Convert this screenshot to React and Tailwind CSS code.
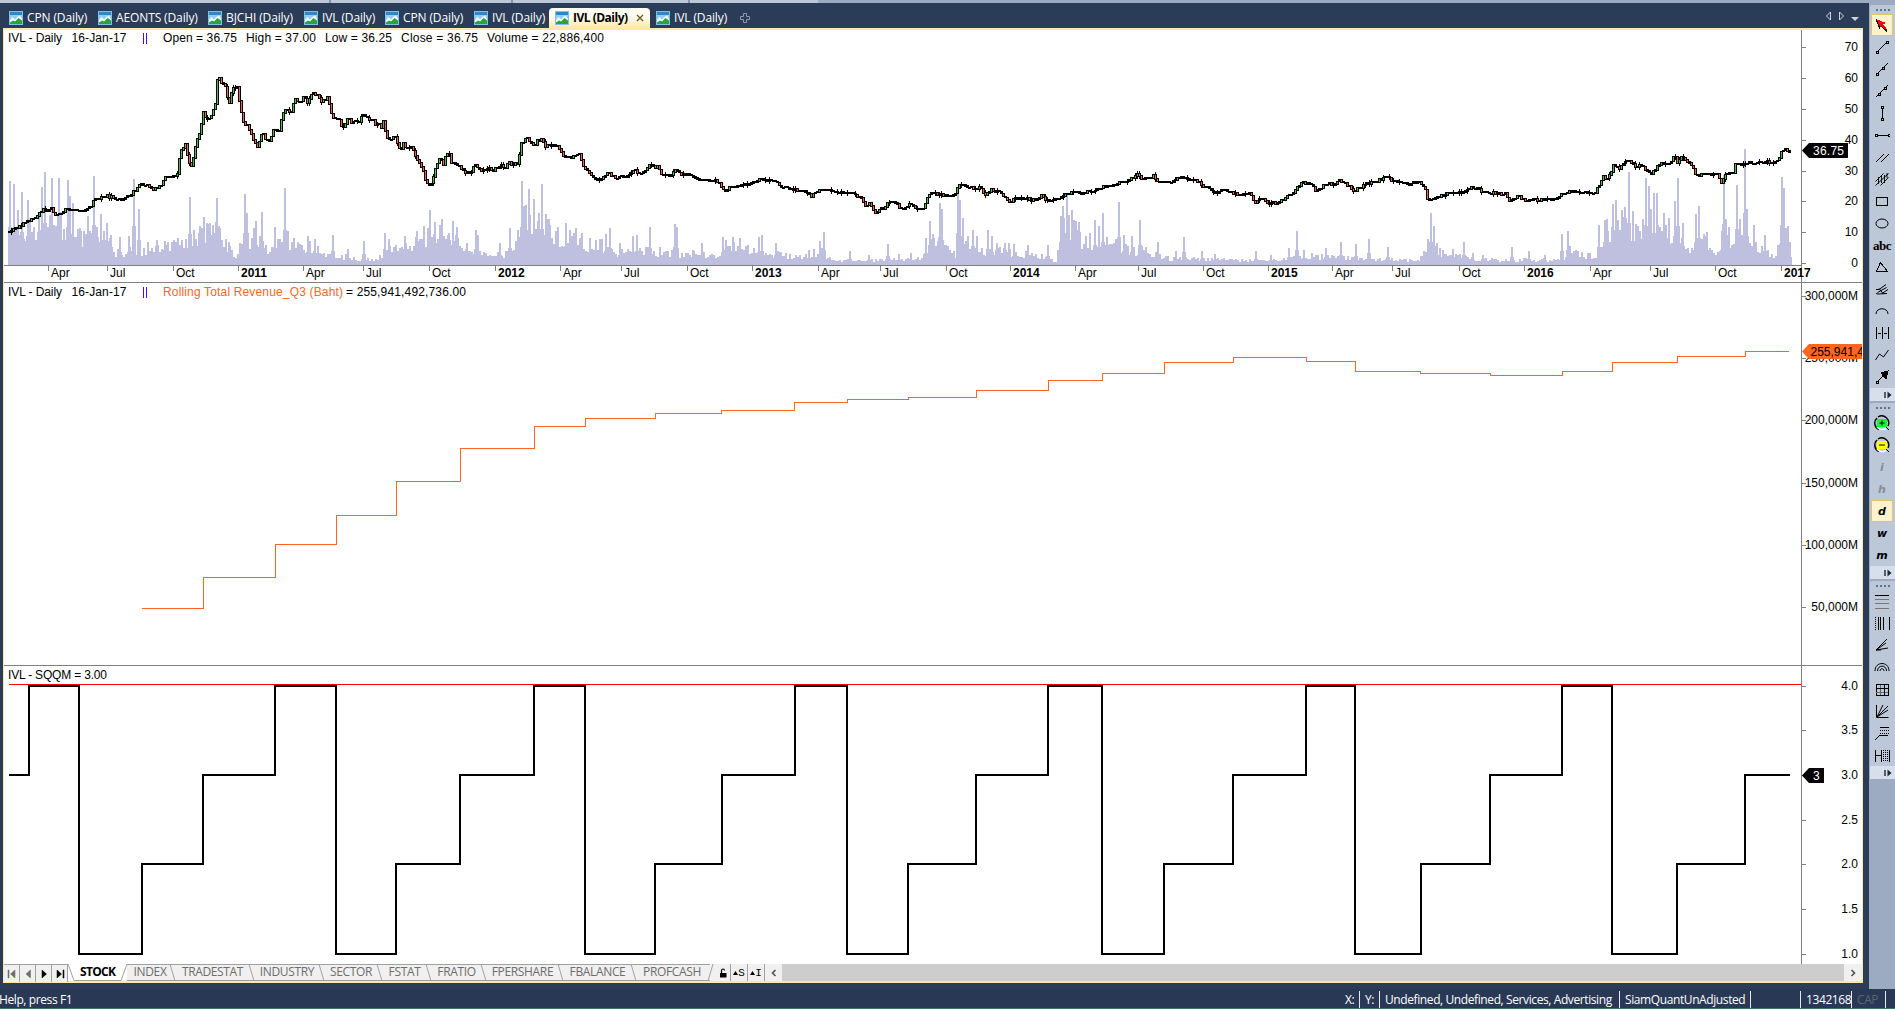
import clsx from 'clsx';

const DOC_TABS = [
  { label: 'CPN (Daily)', width: 'w-[89px]' },
  { label: 'AEONTS (Daily)', width: 'w-[110px]' },
  { label: 'BJCHI (Daily)', width: 'w-[96px]' },
  { label: 'IVL (Daily)', width: 'w-[81px]' },
  { label: 'CPN (Daily)', width: 'w-[89px]' },
  { label: 'IVL (Daily)', width: 'w-[81px]' },
  { label: 'IVL (Daily)', width: 'w-[101px]', active: true },
  { label: 'IVL (Daily)', width: 'w-[89px]' },
];

const SHEETS = [
  { label: 'INDEX', width: 'w-[46px]' },
  { label: 'TRADESTAT', width: 'w-[79px]' },
  { label: 'INDUSTRY', width: 'w-[70px]' },
  { label: 'SECTOR', width: 'w-[58px]' },
  { label: 'FSTAT', width: 'w-[49px]' },
  { label: 'FRATIO', width: 'w-[55px]' },
  { label: 'FPERSHARE', width: 'w-[77px]' },
  { label: 'FBALANCE', width: 'w-[73px]' },
  { label: 'PROFCASH', width: 'w-[76px]' },
];

const TIME_AXIS = [
  [48, 'Apr'], [107, 'Jul'], [173, 'Oct'], [238, '2011'], [303, 'Apr'], [363, 'Jul'], [429, 'Oct'],
  [495, '2012'], [560, 'Apr'], [621, 'Jul'], [687, 'Oct'], [752, '2013'], [818, 'Apr'], [880, 'Jul'],
  [946, 'Oct'], [1010, '2014'], [1075, 'Apr'], [1138, 'Jul'], [1203, 'Oct'], [1268, '2015'],
  [1332, 'Apr'], [1392, 'Jul'], [1459, 'Oct'], [1524, '2016'], [1590, 'Apr'], [1650, 'Jul'],
  [1715, 'Oct'], [1781, '2017'],
];

const PRICE_AXIS = [[263, '0'], [232, '10'], [201, '20'], [171, '30'], [140, '40'], [109, '50'], [78, '60'], [47, '70']];
const REVENUE_AXIS = [[296, '300,000M'], [358, '250,000M'], [420, '200,000M'], [483, '150,000M'], [545, '100,000M'], [607, '50,000M']];
const QUARTER_AXIS = [[686, '4.0'], [730, '3.5'], [775, '3.0'], [820, '2.5'], [864, '2.0'], [909, '1.5'], [954, '1.0']];

// x, level pairs; a level holds until the next x
const REVENUE = [
  [142, 608], [203, 577], [275, 544], [336, 515], [396, 481], [460, 448], [534, 426], [585, 418],
  [655, 413], [721, 410], [794, 402], [847, 399], [908, 397], [976, 390], [1048, 380], [1102, 373],
  [1164, 362], [1233, 357], [1306, 361], [1355, 371], [1420, 373], [1490, 375], [1562, 371],
  [1612, 362], [1677, 356], [1745, 351],
];

const QUARTERS = [
  [9, 3], [29, 4], [79, 1], [142, 2], [203, 3], [275, 4], [336, 1], [396, 2], [460, 3], [534, 4],
  [585, 1], [655, 2], [722, 3], [795, 4], [847, 1], [908, 2], [976, 3], [1048, 4], [1102, 1],
  [1164, 2], [1233, 3], [1306, 4], [1355, 1], [1421, 2], [1490, 3], [1562, 4], [1612, 1],
  [1677, 2], [1745, 3],
];
const QUARTER_Y = { 1: 954, 2: 864, 3: 775, 4: 686 };

// price samples, three stretches with their own origin and scale
const PRICE_PARTS = [
  {
    x0: 0, y0: 50, k: 2.45,
    data: '24,547 40,532 55,530 68,512 85,510 100,490 110,475 120,485 127,472 140,498 155,490 165,478 190,478 200,487 215,478 228,472 234,450 265,438 290,448 298,450 325,435 345,408 365,402 378,420 400,405 410,380 430,380 440,370 446,300 460,285 465,335 475,345 485,270 495,240 503,180 510,210 520,205 525,180 530,190 535,105 540,78 545,105 554,95 565,170 572,125 584,105 600,215 612,225 620,255 636,295 645,245 655,270 665,275 675,240 690,240 697,185 718,180 729,140 737,160 750,140 757,155 773,125 790,155 808,140 817,205 833,205 845,235 857,208 870,218 885,215 892,185 905,205 925,220 938,232 945,212 952,270 972,262 985,310 992,280 1005,300 1013,290 1025,325 1035,345 1042,370 1054,410 1062,400 1072,345 1082,320 1090,340 1101,305 1110,335 1130,348 1145,370 1160,365 1170,340 1182,365 1200,358 1215,362 1227,345 1240,355 1250,340 1272,342 1280,288 1295,258 1310,288 1328,265 1340,288 1372,290 1388,325 1410,320 1422,310 1435,355 1455,380 1475,393 1495,368 1510,385 1545,378 1558,360 1568,370',
  },
  {
    x0: 640, y0: 50, k: 2.45,
    data: '14,368 27,345 47,352 60,378 78,378 93,355 105,372 130,378 148,388 165,392 185,390 198,400 210,425 230,408 245,408 275,402 298,388 335,394 350,410 380,418 410,425 423,440 438,422 458,416 480,425 520,430 545,442 558,470 566,462 580,487 592,475 600,480 610,455 630,455 642,475 655,475 666,458 675,475 697,478 710,440 722,430 735,435 760,438 776,435 780,412 794,402 810,415 840,415 850,437 865,418 890,430 908,457 925,445 950,445 965,450 988,438 1000,452 1030,450 1040,435 1070,425 1085,430 1130,418 1140,408 1165,408 1175,397 1200,393 1223,375 1232,388 1245,380 1258,385 1264,375 1270,395 1300,398 1320,385 1337,380 1375,398 1390,412 1412,428 1435,420 1470,437 1500,430 1510,465 1523,442 1545,462 1568,458',
  },
  {
    x0: 1270, y0: 0, k: 2.509,
    data: '10,610 30,603 45,590 64,580 72,560 90,548 105,550 117,570 133,562 145,550 165,555 178,540 195,550 212,575 230,563 250,550 275,543 297,530 315,548 330,542 355,555 375,545 393,560 400,605 410,602 430,588 455,578 485,577 515,563 540,575 595,583 605,600 625,588 650,605 670,600 720,600 740,580 760,575 800,578 820,578 830,555 840,530 850,540 868,492 880,510 893,482 908,480 918,500 937,495 950,515 960,522 985,490 1010,490 1018,465 1026,488 1036,468 1055,490 1065,505 1075,530 1085,522 1125,522 1135,540 1140,560 1142,530 1155,518 1165,525 1172,492 1190,492 1210,488 1240,488 1279,485 1286,455 1295,450 1305,455',
  },
];

const PRICE = PRICE_PARTS.flatMap((p) =>
  p.data.split(' ').map((s) => {
    const [x, y] = s.split(',').map(Number);
    return [p.x0 + x / p.k, p.y0 + y / 3];
  })
);

// usual volume height along x
const VOLUME_BASE = [
  [9, 30], [60, 38], [75, 28], [105, 26], [115, 12], [150, 15], [170, 18], [185, 22], [215, 36], [225, 20],
  [235, 8], [242, 25], [258, 28], [268, 10], [280, 25], [300, 22], [320, 12], [345, 8], [360, 5], [375, 5],
  [385, 14], [400, 14], [415, 22], [430, 30], [450, 28], [470, 16], [480, 12], [490, 8], [515, 12], [520, 50],
  [545, 38], [560, 25], [600, 20], [615, 12], [630, 12], [650, 14], [690, 11], [720, 8], [730, 18], [760, 12],
  [800, 8], [820, 13], [832, 4], [850, 4], [900, 5], [925, 9], [930, 24], [955, 10], [965, 20], [985, 12],
  [1010, 14], [1040, 8], [1055, 4], [1060, 35], [1075, 35], [1085, 12], [1120, 18], [1140, 14], [1170, 6],
  [1200, 6], [1230, 5], [1265, 4], [1290, 6], [1310, 9], [1350, 6], [1420, 5], [1428, 20], [1440, 12],
  [1470, 6], [1530, 5], [1560, 5], [1570, 12], [1595, 8], [1605, 22], [1620, 40], [1640, 28], [1660, 35],
  [1670, 25], [1690, 15], [1700, 28], [1715, 8], [1725, 25], [1745, 30], [1760, 14], [1775, 8], [1783, 50], [1790, 16],
];

const VOLUME_PEAKS = '10,84 14,81 18,55 22,73 28,65 32,33 39,53 42,78 45,93 48,38 52,87 59,87 61,53 68,85 70,69 73,62 76,28 81,34 88,49 94,89 97,38 101,51 107,42 111,30 120,28 129,29 134,86 139,56 148,23 157,25 165,24 173,20 182,25 190,68 199,32 204,48 207,42 213,40 217,67 219,39 229,23 240,22 245,71 247,52 256,44 262,53 266,20 275,38 285,77 288,34 294,27 308,29 315,26 333,30 348,16 364,24 385,32 389,26 396,20 405,29 417,34 424,39 430,55 435,43 442,46 449,32 453,44 457,38 467,22 476,35 478,30 500,22 510,37 516,24 522,84 524,53 529,76 534,66 539,52 542,81 549,46 558,38 566,42 570,35 576,37 582,32 590,24 606,31 610,37 620,22 633,29 637,30 650,38 660,18 675,41 677,38 693,15 702,22 723,28 726,25 733,28 740,27 759,28 762,30 776,22 781,13 809,15 820,24 824,33 850,14 869,10 888,21 899,11 911,12 926,27 930,44 933,31 940,62 942,56 950,15 958,71 960,65 963,47 968,29 973,35 977,29 988,35 992,29 997,22 1005,22 1009,22 1014,21 1028,20 1048,20 1061,49 1063,59 1067,70 1069,50 1072,55 1076,44 1079,43 1086,29 1090,32 1095,45 1099,39 1103,52 1107,28 1116,26 1119,63 1124,30 1132,29 1140,45 1146,18 1158,23 1176,14 1184,28 1202,14 1215,11 1256,14 1271,10 1289,17 1297,34 1304,15 1326,17 1341,23 1356,21 1369,26 1388,18 1421,9 1428,26 1431,52 1434,39 1437,22 1443,15 1453,16 1464,23 1473,12 1483,10 1512,18 1529,14 1545,10 1562,31 1568,34 1570,19 1589,11 1599,40 1605,45 1607,46 1613,61 1616,65 1623,48 1625,58 1629,93 1633,54 1643,46 1646,87 1649,79 1651,56 1654,72 1657,72 1664,52 1669,47 1675,64 1678,87 1683,42 1696,51 1699,59 1707,33 1722,34 1724,90 1726,46 1729,38 1737,80 1740,46 1745,116 1747,56 1754,40 1765,30 1782,88 1784,77 1786,34 1788,30 1790,18'
  .split(' ')
  .map((s) => s.split(',').map(Number));

function lerp(points, x) {
  if (x <= points[0][0]) return points[0][1];
  for (let i = 1; i < points.length; i++) {
    const [bx, by] = points[i];
    if (x <= bx) {
      const [ax, ay] = points[i - 1];
      return ay + ((by - ay) * (x - ax)) / (bx - ax || 1);
    }
  }
  return points[points.length - 1][1];
}

function noise(n) {
  const v = Math.sin(n * 127.1 + 11.7) * 43758.5453;
  return v - Math.floor(v);
}

function volumePath() {
  let d = '';
  for (let x = 9; x < 1790; x += 2) {
    const h = lerp(VOLUME_BASE, x) * (0.6 + noise(x) * 0.8);
    d += `M${x} 265V${Math.round(265 - h)}h2V265z`;
  }
  VOLUME_PEAKS.forEach(([x, h]) => {
    d += `M${x - 1} 265v-${h}h2v${h}z`;
    // neighbours of a peak are usually busy too
    d += `M${x - 2} 265v-${Math.round(h * 0.45)}h4v${Math.round(h * 0.45)}z`;
  });
  return d;
}

function candles() {
  const out = [];
  let close = lerp(PRICE, 9);
  for (let x = 9; x < 1790; x += 2) {
    const open = close;
    // the early years swing wider
    const swing = x > 175 && x < 560 ? 4 : 2.6;
    close = lerp(PRICE, x + 2) + (noise(x + 0.5) - 0.5) * swing;
    const top = Math.round(Math.min(open, close) - 0.8);
    const bottom = Math.round(Math.max(open, close) + 0.8);
    out.push({ x, top, height: Math.max(bottom - top, 2), up: close < open, wick: noise(x + 3) > 0.85 ? 2 : 0 });
  }
  return out;
}

function stepPath(points, end, toY = (v) => v) {
  return points.map(([x, v], i) => (i ? `H${x}V${toY(v)}` : `M${x} ${toY(v)}`)).join('') + `H${end}`;
}

const CANDLES = candles();
const VOLUME = volumePath();

function AxisLabels({ items }) {
  return items.map(([y, label]) => (
    <g key={label}>
      <rect x="1801" y={y} width="5" height="1" fill="#808080" />
      <text x="1858" y={y + 4} textAnchor="end">{label}</text>
    </g>
  ));
}

function PanelTitle({ y }) {
  return (
    <>
      <text x="8" y={y} textLength="54">IVL - Daily</text>
      <text x="71.5" y={y} textLength="55">16-Jan-17</text>
      <path d={`M143.5 ${y - 9}v11M146.5 ${y - 9}v11`} stroke="#5a00ff" shapeRendering="crispEdges" />
    </>
  );
}

function PricePanel() {
  return (
    <svg viewBox="4 30 1858 253" className="block h-[253px] w-[1858px] font-['Liberation_Sans',Arial,sans-serif] text-xs">
      <g shapeRendering="crispEdges">
        <path d={VOLUME} fill="#bfbfdf" />
        {CANDLES.map((c) => (
          <g key={c.x}>
            {c.wick > 0 && <rect x={c.x} y={c.top - c.wick} width="1" height={c.height + c.wick * 2} />}
            <rect x={c.x - 1} y={c.top} width="3" height={c.height} />
            {c.height > 3 && <rect x={c.x} y={c.top + 1} width="1" height={c.height - 2} fill={c.up ? '#32cd32' : '#ff6622'} />}
          </g>
        ))}
        <path d="M4 265.5H1801M1801.5 30V283M4 282.5H1862" stroke="#808080" />
        {TIME_AXIS.map(([x]) => (
          <rect key={x} x={x} y="265" width="1" height="6" fill="#808080" />
        ))}
      </g>
      {TIME_AXIS.map(([x, label]) => (
        <text key={x} x={x + 3} y="277" className={label.startsWith('20') ? 'font-bold' : ''}>{label}</text>
      ))}
      <AxisLabels items={PRICE_AXIS} />
      <path d="M1802 150.5L1809 143H1848V158H1809z" />
      <text x="1813" y="155" fill="#fff" textLength="31">36.75</text>
      <PanelTitle y={42} />
      <text x="163" y="42" textLength="74">Open = 36.75</text>
      <text x="246" y="42" textLength="70">High = 37.00</text>
      <text x="325" y="42" textLength="67">Low = 36.25</text>
      <text x="401" y="42" textLength="77">Close = 36.75</text>
      <text x="487" y="42" textLength="117">Volume = 22,886,400</text>
    </svg>
  );
}

function RevenuePanel() {
  return (
    <svg viewBox="4 283 1858 383" className="block h-[383px] w-[1858px] font-['Liberation_Sans',Arial,sans-serif] text-xs">
      <g fill="none" shapeRendering="crispEdges">
        <path d={stepPath(REVENUE, 1789, (y) => y + 0.5)} stroke="#ff6622" />
        <path d="M1801.5 283V666M4 665.5H1862" stroke="#808080" />
      </g>
      <AxisLabels items={REVENUE_AXIS} />
      <path d="M1802 351.5L1809 344H1862V359H1809z" fill="#ff6622" />
      <text x="1810.5" y="356">255,941,4</text>
      <PanelTitle y={296} />
      <text x="163" y="296" fill="#ff6622" textLength="180">Rolling Total Revenue_Q3 (Baht)</text>
      <text x="346" y="296" textLength="120">= 255,941,492,736.00</text>
    </svg>
  );
}

function QuarterPanel() {
  return (
    <svg viewBox="4 666 1858 298" className="block h-[298px] w-[1858px] font-['Liberation_Sans',Arial,sans-serif] text-xs">
      <g fill="none" shapeRendering="crispEdges">
        <path d={stepPath(QUARTERS, 1790, (v) => QUARTER_Y[v])} stroke="#000" strokeWidth="2" />
        <path d="M9 684.5H1801" stroke="#f00" />
        <path d="M1801.5 666V964" stroke="#808080" />
      </g>
      <AxisLabels items={QUARTER_AXIS} />
      <path d="M1802 775.5L1809 768H1824V783H1809z" />
      <text x="1813" y="780" fill="#fff">3</text>
      <text x="8" y="679" textLength="99">IVL - SQQM = 3.00</text>
    </svg>
  );
}

function ChartIcon() {
  return (
    <svg viewBox="0 0 14 14" className="size-[14px] shrink-0">
      <rect x="0.5" y="0.5" width="13" height="13" fill="#2f86c8" stroke="#7fbfe8" />
      <path d="M1 4h12v5H1z" fill="#8fd0f4" />
      <path d="M1 9l2.500-3L6 8.500l3-3 2-1L13 8v4H1z" fill="#f4fbff" />
      <path d="M1 13v-1.500l3-2 2 1L9.500 7 13 9.500V13z" fill="#2ba336" />
    </svg>
  );
}

function DocTab({ tab }) {
  return (
    <div
      className={clsx(
        "flex h-5 shrink-0 items-center gap-1 whitespace-nowrap pl-1.5 font-['Open_Sans',sans-serif] text-xs leading-none",
        tab.width,
        tab.active ? 'rounded-t-sm bg-linear-to-b from-[#fffcf2] from-40% to-[#ffe8a6] font-bold tracking-[-0.5px] text-black' : 'tracking-[-0.12px] text-white'
      )}
    >
      <ChartIcon />
      <span>{tab.label}</span>
      {tab.active && (
        <svg viewBox="0 0 8 8" className="ml-1 size-2 shrink-0">
          <path d="M1 1l6 6M7 1L1 7" stroke="#6b5a2c" strokeWidth="1.4" />
        </svg>
      )}
    </div>
  );
}

function TabStrip() {
  return (
    <div className="flex h-[25px] w-[1866px] items-end pl-[3px]">
      {DOC_TABS.map((tab, i) => (
        <DocTab key={i} tab={tab} />
      ))}
      <svg viewBox="0 0 12 12" className="mb-1 size-3" fill="none" stroke="#8d99ad">
        <path d="M4.5 1.5h3v3h3v3h-3v3h-3v-3h-3v-3h3z" />
      </svg>
      <svg viewBox="0 0 36 12" className="mr-1 mb-1.5 ml-auto h-3 w-9" fill="none" stroke="#ced4df">
        <path d="M4.5 2v8l-4-4zM13.5 2v8l4-4z" />
        <path d="M25 7h8l-4 4z" fill="#ced4df" stroke="none" />
      </svg>
    </div>
  );
}

// drawing tools, 16x16 each
const sq = (x, y) => `M${x - 1} ${y - 1}h2v2h-2z`;

const DRAW_TOOLS = [
  { name: 'select', active: true, art: <><path d="M7 8l6 6" stroke="#222" strokeWidth="2.500" /><path d="M2 2l10 4-2.500 1.500 3 3.500-2 1-3.500-3L6 12z" fill="#f00" stroke="none" /><path d="M2 2l4 10M9 11l4 4" stroke="#000" /></> },
  { name: 'trend', art: <path d={`M4 12L12 4${sq(3, 13)}${sq(13, 3)}`} /> },
  { name: 'ray', art: <path d={`M4 12L14 2${sq(3, 13)}${sq(9, 7)}`} /> },
  { name: 'extended', art: <path d={`M2 14L14 2${sq(5, 11)}${sq(11, 5)}`} /> },
  { name: 'vertical', art: <path d={`M8.500 3v10${sq(8.5, 2)}${sq(8.5, 14)}`} /> },
  { name: 'horizontal', art: <path d={`M3 8.500h11${sq(2, 8.5)}${sq(15, 8.5)}`} /> },
  { name: 'parallel', art: <path d="M2 13l8-8M7 13l8-8" /> },
  { name: 'channel', smooth: true, art: <path d="M1.500 10.500l8-8M1.500 14.500l13-12M6.500 14.500l8-8M4.500 6v7M7.500 4v8M10.500 4v8M13 2v5" strokeWidth="0.900" /> },
  { name: 'rectangle', art: <path d="M2.500 4.500h11v8h-11z" /> },
  { name: 'ellipse', smooth: true, art: <ellipse cx="8" cy="8.500" rx="6" ry="4.500" /> },
  { name: 'text', label: 'abc' },
  { name: 'triangle', art: <path d="M6.500 3.500l7 9h-11z" /> },
  { name: 'pitchfork', smooth: true, art: <path d="M2 8.500h3l7-5M3.500 11.500l9-5M2 12.500l2 .5 9-.5M8 12.500l6-4M5 7.500l4 5" /> },
  { name: 'arc', smooth: true, art: <path d="M2 11c0-7 12-7 12 0" /> },
  { name: 'cycles', art: <path d="M2.500 2v12M8.500 2v12M14.500 2v12M4 8.500h3M10 8.500h3" /> },
  { name: 'zigzag', smooth: true, art: <path d="M1.500 13l4-6 4 3 5-7" /> },
  { name: 'arrow', art: <><path d={`M4 12l6-6${sq(3, 13)}`} /><path d="M7 4l7-2-2 8z" fill="#000" /></> },
];

const INTERVAL_TOOLS = [
  { name: 'zoom-in', smooth: true, art: <><path d="M5 14.500A7 7 0 0 1 3 3" strokeWidth="1.500" /><path d="M4 2a7 7 0 0 1 10 9" strokeWidth="1.300" /><path d="M3 12a7 7 0 0 0 9 1.500" stroke="#fff" strokeWidth="1.500" /><rect x="3" y="4" width="10" height="8" fill="#0f3" stroke="none" /><path d="M5.500 8h5M8 5.500v5M12 12l3 3" /></> },
  { name: 'zoom-out', smooth: true, art: <><path d="M5 14.500A7 7 0 0 1 3 3" strokeWidth="1.500" /><path d="M4 2a7 7 0 0 1 10 9" strokeWidth="1.300" /><path d="M3 12a7 7 0 0 0 9 1.500" stroke="#fff" strokeWidth="1.500" /><rect x="3" y="4" width="10" height="8" fill="#ff0" stroke="none" /><path d="M5 8h6M12 12l3 3" /></> },
  { name: 'i', label: 'i', disabled: true },
  { name: 'h', label: 'h', disabled: true },
  { name: 'd', label: 'd', active: true },
  { name: 'w', label: 'w' },
  { name: 'm', label: 'm' },
];

const FIB_TOOLS = [
  { name: 'retracement', art: <><path d="M1 2.500h14" /><path d="M1 6.500h14M1 10.500h14M1 15.500h14" stroke="#777" /></> },
  { name: 'timezones', art: <><path d="M4.500 2v13M6.500 2v13M9.500 2v13M15 2v13" /><path d="M1.500 2v13" strokeDasharray="1 1" /></> },
  { name: 'fan', smooth: true, art: <path d="M2 13L13 2M2 13l10-7M2 13l12-2M2 13h5" /> },
  { name: 'arcs', smooth: true, art: <path d="M1 12c0-10 14-10 14 0M3.500 12c0-6.500 9-6.500 9 0M6 12c0-3 4-3 4 0" /> },
  { name: 'gannsquare', art: <><path d="M2.500 3.500h12v11h-12z" /><path d="M6.500 4v10M2 11.500h12" stroke="#666" /><path d="M10.500 4v10M2 7.500h12" /></> },
  { name: 'gannfan', smooth: true, art: <path d="M2.500 2v12.500h12M3 14L9 2M3 14L14 3M3 14l11-7" /> },
  { name: 'extension', art: <><path d="M1 15l5-5h8M6 2.500h9" /><path d="M6 5.500h9M6 8h9" strokeDasharray="1 1" /></> },
  { name: 'timeext', art: <><path d="M1.500 3v12M1 8.500h6M7.500 3v12M15.500 3v12" /><path d="M9.500 3v12M11.500 3v12M13.500 3v12" strokeDasharray="1 1" /></> },
];

function Toolbar({ tools }) {
  return (
    <div className="rounded-l-xs bg-[#bcc7d8]">
      <div className="flex h-[9px] items-center justify-center gap-[2px]">
        {[0, 1, 2, 3].map((i) => (
          <span key={i} className="size-[2px] bg-[#60728c]" />
        ))}
      </div>
      {tools.map((t) => (
        <div
          key={t.name}
          className={clsx('ml-px flex h-[22px] w-[22px] items-center justify-center', t.active && 'border border-[#e5c365] bg-[#fff3cd]')}
        >
          {t.label === 'abc' && <span className="font-['Liberation_Serif',serif] text-[13px] leading-none font-bold tracking-[-0.5px]">abc</span>}
          {t.label && t.label !== 'abc' && (
            <span className={clsx("font-['DejaVu_Sans',sans-serif] text-[11px] leading-none font-bold italic", t.disabled ? 'text-[#858e9b]' : 'text-black')}>
              {t.label}
            </span>
          )}
          {t.art && (
            <svg viewBox="0 0 16 16" className="size-4" fill="none" stroke="#000" shapeRendering={t.smooth ? 'auto' : 'crispEdges'}>
              {t.art}
            </svg>
          )}
        </div>
      ))}
      <div className="flex h-[13px] items-center justify-end bg-[#d8dfea] pr-[3px]">
        <svg viewBox="0 0 8 8" className="size-2">
          <path d="M1 1v6" stroke="#1b293e" strokeWidth="1.400" />
          <path d="M3.500 0.500v7L7.500 4z" fill="#1b293e" />
        </svg>
      </div>
    </div>
  );
}

function NavButton({ d, muted }) {
  return (
    <div className="flex h-[17px] w-4 items-center justify-center border-r border-[#a0a0a0] bg-[#f0f0f0]">
      <svg viewBox="0 0 10 10" className="size-[10px]" fill={muted ? '#6d6d6d' : '#000'} stroke={muted ? '#6d6d6d' : '#000'} strokeWidth="0.500">
        <path d={d} />
      </svg>
    </div>
  );
}

function SheetBar() {
  return (
    <div className="flex h-[17px] w-[1858px] bg-[#f0f0f0] font-['Open_Sans',sans-serif] text-[12px] leading-[14px]">
      <div className="flex border-t border-[#a0a0a0]">
        <NavButton muted d="M1 1h1v8H1zM8 1v8L3.500 5z" />
        <NavButton muted d="M7.500 1v8L3 5z" />
        <NavButton d="M3 1v8l4.500-4z" />
        <NavButton d="M2 1v8l4.500-4zM8 1h1v8H8z" />
      </div>
      <div className="relative w-[59px] bg-white pt-px pl-3 font-bold tracking-[-0.7px]">
        STOCK
        <svg viewBox="0 0 59 17" className="absolute inset-0 h-[17px] w-[59px]" fill="none" stroke="#a0a0a0">
          <path d="M0 0l6 16.500h47L59 0" />
        </svg>
      </div>
      {SHEETS.map((s, i) => (
        <div key={s.label} className={clsx('relative border-t border-b border-[#a0a0a0] text-center tracking-[-0.35px] whitespace-nowrap text-[#6d6d6d]', s.width)}>
          {s.label}
          <svg viewBox="0 0 8 17" className="absolute -top-px -right-1 h-[17px] w-2" fill="none" stroke="#a0a0a0">
            <path d={i === SHEETS.length - 1 ? 'M7 0L2 17' : 'M1 0l5 17'} />
          </svg>
        </div>
      ))}
      <div className="ml-1 flex w-[17px] items-center justify-center border-r border-[#a0a0a0] pl-px">
        <svg viewBox="0 0 10 10" className="size-[10px]">
          <path d="M2 5h6.500v4.500H2z" />
          <path d="M3.500 5V2.500a1.500 1.500 0 0 1 3 0" fill="none" stroke="#000" strokeWidth="1.200" />
        </svg>
      </div>
      {['S', 'I'].map((c) => (
        <div key={c} className="flex w-[17px] items-center justify-center border-r border-[#a0a0a0] font-['Liberation_Mono',monospace] text-[11px]">
          <svg viewBox="0 0 5 4" className="h-1 w-[5px]">
            <path d="M0 4h5L2.500 0z" />
          </svg>
          {c}
        </div>
      ))}
      <div className="flex flex-1 bg-white">
        <div className="flex w-[17px] items-center justify-center bg-[#f0f0f0]">
          <svg viewBox="0 0 8 8" className="size-2" fill="none" stroke="#505050" strokeWidth="1.600">
            <path d="M5.500 1l-3 3 3 3" />
          </svg>
        </div>
        <div className="flex-1 bg-[#cdcdcd]" />
        <div className="flex w-[18px] items-center justify-center bg-[#f0f0f0]">
          <svg viewBox="0 0 8 8" className="size-2" fill="none" stroke="#505050" strokeWidth="1.600">
            <path d="M2.500 1l3 3-3 3" />
          </svg>
        </div>
      </div>
    </div>
  );
}

function StatusCell({ children, className }) {
  return <div className={clsx('h-[17px] shrink-0 border-r border-[#e4e8ee] pl-[5px]', className)}>{children}</div>;
}

function StatusBar() {
  return (
    <div className="flex h-5 items-center overflow-hidden border-b border-[#3d7561] bg-[#293955] pt-0.5 font-['Open_Sans',sans-serif] text-xs leading-[17px] tracking-[-0.4px] whitespace-nowrap text-white">
      <span className="-ml-px flex-1">Help, press F1</span>
      <StatusCell className="w-5">X:</StatusCell>
      <StatusCell className="w-5">Y:</StatusCell>
      <StatusCell className="w-[240px]">Undefined, Undefined, Services, Advertising</StatusCell>
      <StatusCell className="w-[131px]">SiamQuantUnAdjusted</StatusCell>
      <StatusCell className="w-[50px]" />
      <StatusCell className="w-[51px]">1342168</StatusCell>
      <StatusCell className="mr-[9px] w-[34px] text-[#5d6472]">CAP</StatusCell>
    </div>
  );
}

export default function App() {
  return (
    <div className="flex h-[1009px] w-[1895px] flex-col overflow-hidden bg-[#2b3c59]">
      <div className="flex h-[3px] bg-[#9cabc2]">
        <div className="w-[331px] border-r-2 border-[#8493ad] bg-[#bcc7d8]" />
        <div className="w-[182px] border-r-2 border-[#8493ad] bg-[#bcc7d8]" />
        <div className="w-[177px] border-r-2 border-[#8493ad] bg-[#bcc7d8]" />
        <div className="w-[128px] bg-[#bcc7d8]" />
      </div>
      <div className="flex h-[986px]">
        <div className="flex w-[1869px] flex-col">
          <TabStrip />
          <div className="ml-[3px] w-[1860px] border-x border-t-2 border-b-2 border-[#ffe8a6] bg-white">
            <PricePanel />
            <RevenuePanel />
            <QuarterPanel />
            <SheetBar />
          </div>
        </div>
        <div className="flex flex-1 flex-col gap-[2px] bg-[#9cabc2] pt-0.5 pl-px">
          <Toolbar tools={DRAW_TOOLS} />
          <Toolbar tools={INTERVAL_TOOLS} />
          <Toolbar tools={FIB_TOOLS} />
        </div>
      </div>
      <StatusBar />
    </div>
  );
}
